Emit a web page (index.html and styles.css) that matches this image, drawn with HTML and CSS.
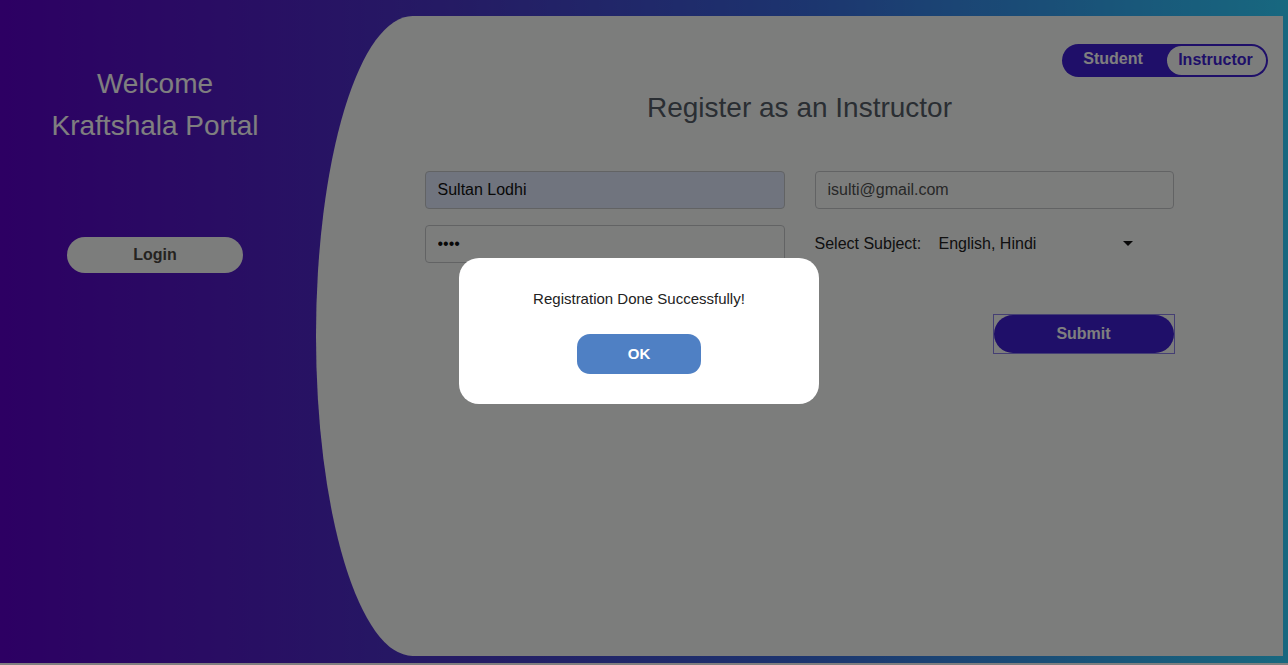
FILE: index.html
```html
<!DOCTYPE html>
<html lang="en">
<head>
<meta charset="utf-8">
<title>Kraftshala Portal</title>
<link rel="stylesheet" href="styles.css">
</head>
<body>
<div class="page">
  <aside class="side">
    <h1 class="welcome">Welcome<br>Kraftshala Portal</h1>
    <button class="login-btn">Login</button>
  </aside>
  <main class="panel">
    <div class="toggle-row">
      <div class="toggle">
        <span class="toggle-opt">Student</span>
        <span class="toggle-opt active">Instructor</span>
      </div>
    </div>
    <h2 class="title">Register as an Instructor</h2>
    <form class="form">
      <input class="field autofill" type="text" value="Sultan Lodhi">
      <input class="field muted" type="text" value="isulti@gmail.com">
      <input class="field" type="password" value="abcd">
      <div class="subject">
        <span class="subject-label">Select Subject:</span>
        <div class="select">
          <span>English, Hindi</span>
          <span class="caret"></span>
        </div>
      </div>
      <div></div>
      <div class="submit-cell">
        <div class="submit-wrap"><button type="button" class="submit-btn">Submit</button></div>
      </div>
    </form>
  </main>
</div>
<div class="overlay">
  <div class="modal">
    <p class="modal-text">Registration Done Successfully!</p>
    <button class="ok-btn">OK</button>
  </div>
</div>
</body>
</html>
```
FILE: styles.css
```css
* { box-sizing: border-box; }
html, body { margin: 0; padding: 0; }
body {
  background: #ffffff;
  font-family: "Liberation Sans", Arial, sans-serif;
  height: 665px;
  overflow: hidden;
}
.page {
  height: 663px;
  display: flex;
  background: linear-gradient(to right, #5a00c6 0%, #4a36c8 35%, #3a64dc 60%, #2fd0ff 100%);
  padding: 16px 5px 7px 0;
}
.side {
  width: 316px;
  flex: none;
  display: flex;
  flex-direction: column;
  align-items: center;
  padding-right: 6px;
}
.welcome {
  margin: 47px 0 0;
  font-size: 28px;
  font-weight: normal;
  line-height: 42px;
  color: #ffffff;
  text-align: center;
}
.login-btn {
  margin-top: 90px;
  width: 176px;
  height: 36px;
  border: none;
  border-radius: 18px;
  background: #f9fbf9;
  font-family: "Liberation Sans", Arial, sans-serif;
  font-weight: bold;
  font-size: 16px;
  color: #4a4640;
}
.panel {
  flex: 1;
  background: #f9fbf9;
  border-radius: 10% 0 0 10% / 50% 0 0 50%;
  display: flex;
  flex-direction: column;
  align-items: center;
  padding: 28px 15px 0;
}
.toggle-row {
  align-self: stretch;
  display: flex;
  justify-content: flex-end;
}
.toggle {
  display: flex;
  align-items: center;
  height: 33px;
  width: 206px;
  border-radius: 17px;
  background: #3e1ed2;
  padding: 2px 2px 2px 0;
}
.toggle-opt {
  flex: 1;
  text-align: center;
  font-weight: bold;
  font-size: 16px;
  color: #ffffff;
  padding-bottom: 4px;
  padding-left: 2px;
}
.toggle-opt.active {
  flex: none;
  width: 99px;
  height: 29px;
  line-height: 27px;
  border-radius: 15px;
  background: #f9fbf9;
  color: #3e1ed2;
  padding: 0 2px 0 0;
  margin-left: 5px;
}
.title {
  margin: 15px 0 0;
  font-size: 28px;
  font-weight: normal;
  color: #545c66;
  line-height: 32px;
}
.form {
  margin-top: 47px;
  width: 750px;
  display: grid;
  grid-template-columns: 360px 359px;
  column-gap: 30px;
  row-gap: 16px;
}
.field {
  height: 38px;
  border: 1px solid #c4c6c8;
  border-radius: 4px;
  background: #f9fbf9;
  padding: 0 12px;
  font-family: "Liberation Sans", Arial, sans-serif;
  font-size: 16px;
  color: #111;
  width: 100%;
}
.field.autofill { background: #e0e8fc; }
.field.muted { color: #505050; }
.subject {
  display: flex;
  align-items: center;
  font-size: 16px;
  color: #222;
}
.subject-label { width: 124px; flex: none; }
.select {
  display: flex;
  align-items: center;
  justify-content: space-between;
  width: 196px;
  padding-top: 0;
}
.caret {
  width: 0;
  height: 0;
  border-left: 5px solid transparent;
  border-right: 5px solid transparent;
  border-top: 5px solid #111;
  margin-right: 2px;
  margin-top: -2px;
}
.submit-cell {
  display: flex;
  justify-content: flex-end;
  padding-top: 35px;
}
.submit-wrap {
  border: 1px solid #8a7ee8;
  width: 182px;
  height: 40px;
  margin-right: -1px;
}
.submit-btn {
  width: 180px;
  height: 38px;
  border: none;
  border-radius: 19px;
  background: #3e1ed2;
  color: #ffffff;
  font-family: "Liberation Sans", Arial, sans-serif;
  font-weight: bold;
  font-size: 16px;
  display: block;
}
.overlay {
  position: fixed;
  inset: 0;
  background: rgba(0, 0, 0, 0.5);
  display: flex;
  align-items: center;
  justify-content: center;
  padding-right: 10px;
  padding-bottom: 4px;
}
.modal {
  width: 360px;
  height: 146px;
  background: #ffffff;
  border-radius: 20px;
  display: flex;
  flex-direction: column;
  align-items: center;
  padding-top: 32px;
}
.modal-text {
  margin: 0;
  font-size: 15px;
  line-height: 18px;
  color: #222;
}
.ok-btn {
  margin-top: 26px;
  width: 124px;
  height: 40px;
  border: none;
  border-radius: 13px;
  background: #4f80c4;
  color: #ffffff;
  font-family: "Liberation Sans", Arial, sans-serif;
  font-weight: bold;
  font-size: 15px;
}
```
